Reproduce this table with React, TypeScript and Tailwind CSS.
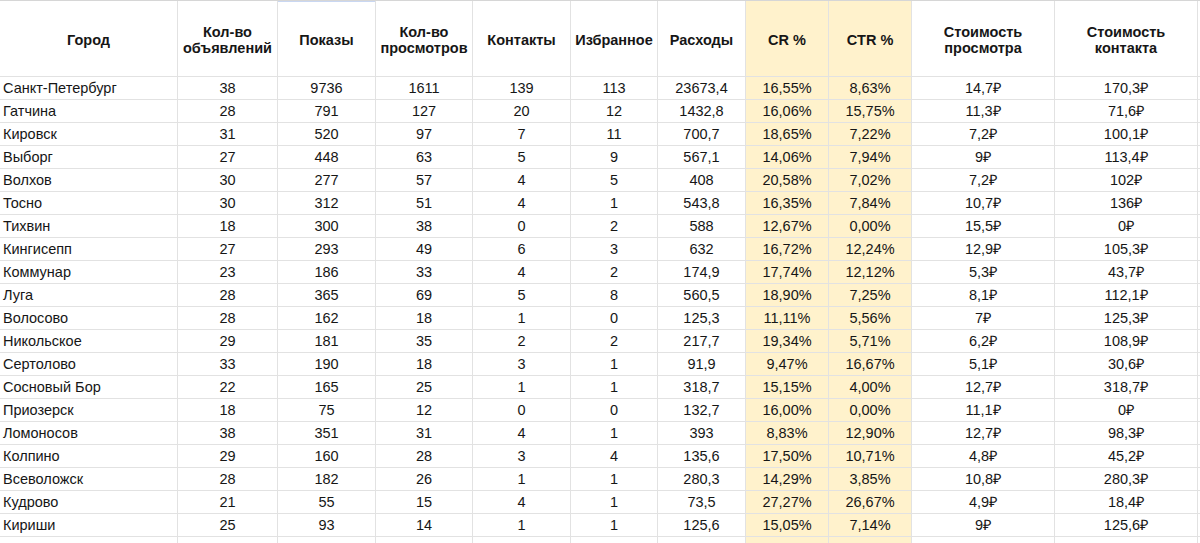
import React from "react";

const rows: string[][] = [
  ["Санкт-Петербург", "38", "9736", "1611", "139", "113", "23673,4", "16,55%", "8,63%", "14,7₽", "170,3₽"],
  ["Гатчина", "28", "791", "127", "20", "12", "1432,8", "16,06%", "15,75%", "11,3₽", "71,6₽"],
  ["Кировск", "31", "520", "97", "7", "11", "700,7", "18,65%", "7,22%", "7,2₽", "100,1₽"],
  ["Выборг", "27", "448", "63", "5", "9", "567,1", "14,06%", "7,94%", "9₽", "113,4₽"],
  ["Волхов", "30", "277", "57", "4", "5", "408", "20,58%", "7,02%", "7,2₽", "102₽"],
  ["Тосно", "30", "312", "51", "4", "1", "543,8", "16,35%", "7,84%", "10,7₽", "136₽"],
  ["Тихвин", "18", "300", "38", "0", "2", "588", "12,67%", "0,00%", "15,5₽", "0₽"],
  ["Кингисепп", "27", "293", "49", "6", "3", "632", "16,72%", "12,24%", "12,9₽", "105,3₽"],
  ["Коммунар", "23", "186", "33", "4", "2", "174,9", "17,74%", "12,12%", "5,3₽", "43,7₽"],
  ["Луга", "28", "365", "69", "5", "8", "560,5", "18,90%", "7,25%", "8,1₽", "112,1₽"],
  ["Волосово", "28", "162", "18", "1", "0", "125,3", "11,11%", "5,56%", "7₽", "125,3₽"],
  ["Никольское", "29", "181", "35", "2", "2", "217,7", "19,34%", "5,71%", "6,2₽", "108,9₽"],
  ["Сертолово", "33", "190", "18", "3", "1", "91,9", "9,47%", "16,67%", "5,1₽", "30,6₽"],
  ["Сосновый Бор", "22", "165", "25", "1", "1", "318,7", "15,15%", "4,00%", "12,7₽", "318,7₽"],
  ["Приозерск", "18", "75", "12", "0", "0", "132,7", "16,00%", "0,00%", "11,1₽", "0₽"],
  ["Ломоносов", "38", "351", "31", "4", "1", "393", "8,83%", "12,90%", "12,7₽", "98,3₽"],
  ["Колпино", "29", "160", "28", "3", "4", "135,6", "17,50%", "10,71%", "4,8₽", "45,2₽"],
  ["Всеволожск", "28", "182", "26", "1", "1", "280,3", "14,29%", "3,85%", "10,8₽", "280,3₽"],
  ["Кудрово", "21", "55", "15", "4", "1", "73,5", "27,27%", "26,67%", "4,9₽", "18,4₽"],
  ["Кириши", "25", "93", "14", "1", "1", "125,6", "15,05%", "7,14%", "9₽", "125,6₽"],
];

const headers: string[][] = [
  ["Город"],
  ["Кол-во", "объявлений"],
  ["Показы"],
  ["Кол-во", "просмотров"],
  ["Контакты"],
  ["Избранное"],
  ["Расходы"],
  ["CR %"],
  ["CTR %"],
  ["Стоимость", "просмотра"],
  ["Стоимость", "контакта"],
];

const gridCols =
  "grid grid-cols-[178px_100px_98px_97px_98px_87px_88px_83px_83px_143px_143px_3px]";

function bgFor(i: number) {
  return i === 7 || i === 8 ? "bg-[#fff2cc]" : "bg-white";
}

export default function App() {
  return (
    <div
      className="w-[1200px] h-[543px] overflow-hidden bg-white text-[14.5px] text-[#161616]"
      style={{ fontFamily: '"Liberation Sans", Arial, sans-serif' }}
    >
      <div className={gridCols + " border-t border-[#d6d6d6]"}>
        {headers.map((h, i) => (
          <div
            key={i}
            className={
              "h-[76px] flex flex-col items-center justify-center pt-[3px] border-r border-b border-[#e2e2e2] font-bold leading-[16px] text-center " +
              bgFor(i) +
              (i === 2 ? " shadow-[inset_0_1px_0_#c9d7f2]" : "")
            }
          >
            {h.map((line, j) => (
              <span key={j}>{line}</span>
            ))}
          </div>
        ))}
        <div className="h-[76px] border-b border-[#e2e2e2]" />

        {rows.map((r, ri) => (
          <React.Fragment key={ri}>
            {r.map((c, ci) => (
              <div
                key={ci}
                className={
                  "h-[23px] flex items-end pb-[2px] border-r border-b border-[#e2e2e2] leading-[17px] whitespace-nowrap " +
                  (ci === 0 ? "justify-start pl-[3px] " : "justify-center ") +
                  bgFor(ci)
                }
              >
                {c}
              </div>
            ))}
            <div className="h-[23px] border-b border-[#e2e2e2]" />
          </React.Fragment>
        ))}

        {headers.map((_, i) => (
          <div key={"e" + i} className={"h-[23px] border-r border-[#e2e2e2] " + bgFor(i)} />
        ))}
        <div className="h-[23px]" />
      </div>
    </div>
  );
}
